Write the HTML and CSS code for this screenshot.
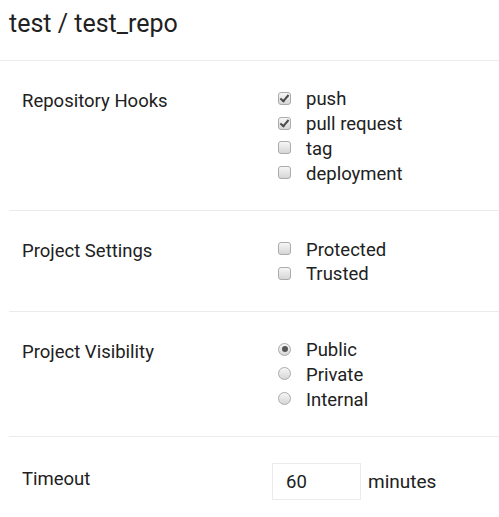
FILE: index.html
```html
<!DOCTYPE html>
<html>
<head>
<meta charset="utf-8">
<link rel="stylesheet" href="styles.css">
</head>
<body>
<header class="page-header"><h1 class="title">test / test_repo</h1></header>
<section class="setting">
  <div class="label">Repository Hooks</div>
  <div class="controls">
    <label class="opt"><input type="checkbox" class="cb" checked><span>push</span></label>
    <label class="opt"><input type="checkbox" class="cb" checked><span>pull request</span></label>
    <label class="opt"><input type="checkbox" class="cb"><span>tag</span></label>
    <label class="opt"><input type="checkbox" class="cb"><span>deployment</span></label>
  </div>
</section>
<section class="setting">
  <div class="label">Project Settings</div>
  <div class="controls">
    <label class="opt"><input type="checkbox" class="cb"><span>Protected</span></label>
    <label class="opt"><input type="checkbox" class="cb"><span>Trusted</span></label>
  </div>
</section>
<section class="setting">
  <div class="label">Project Visibility</div>
  <div class="controls">
    <label class="opt"><input type="radio" name="vis" class="rb" checked><span>Public</span></label>
    <label class="opt"><input type="radio" name="vis" class="rb"><span>Private</span></label>
    <label class="opt"><input type="radio" name="vis" class="rb"><span>Internal</span></label>
  </div>
</section>
<section class="setting last">
  <div class="label label-timeout">Timeout</div>
  <div class="controls inline">
    <input type="text" class="num" value="60"><span class="unit">minutes</span>
  </div>
</section>
</body>
</html>
```
FILE: styles.css
```css
html, body { margin: 0; padding: 0; background: #fff; }
body { font-family: Roboto, "Noto Sans", sans-serif; color: #212121; }
.page-header { border-bottom: 1px solid #ebebeb; padding: 6px 9px 18px; }
.title { margin: 0; font-size: 25px; font-weight: 400; line-height: 36px; color: #212121; }
.setting {
  margin-left: 9px;
  border-bottom: 1px solid #ebebeb;
  display: grid;
  grid-template-columns: 250px 1fr;
  padding: 25px 0 25px 13px;
}
.setting.last { border-bottom: none; padding-top: 26px; }
.label { font-size: 18.5px; line-height: 30px; }
.label-timeout { line-height: 32px; }
.controls { display: flex; flex-direction: column; }
.controls.inline { flex-direction: row; align-items: center; }
.opt { display: flex; align-items: center; height: 24.8px; font-size: 18.5px; }
.opt span { margin-left: 15px; position: relative; top: 1px; }
.cb, .rb {
  -webkit-appearance: none; appearance: none;
  margin: 0 0 0 6px; width: 13px; height: 13px;
  border: 1px solid #ababab;
  background: linear-gradient(#f6f6f6, #d6d6d6);
  box-sizing: border-box; position: relative; flex: none;
}
.cb { border-radius: 3px; }
.cb:checked::after {
  content: ""; position: absolute; left: 3px; top: 0px;
  width: 3px; height: 7px;
  border: solid #4a4a4a; border-width: 0 2px 2px 0;
  transform: rotate(40deg);
}
.rb { border-radius: 50%; }
.rb:checked::after {
  content: ""; position: absolute; left: 2.5px; top: 2.5px;
  width: 6px; height: 6px; border-radius: 50%; background: #555;
}
.num {
  width: 89px; height: 37px; box-sizing: border-box;
  border: 1px solid #ebebeb; padding: 0 0 0 13px; margin: 0;
  font: 18.5px Roboto, sans-serif; color: #212121; outline: none;
}
.unit { margin-left: 7px; font-size: 19px; }
```
